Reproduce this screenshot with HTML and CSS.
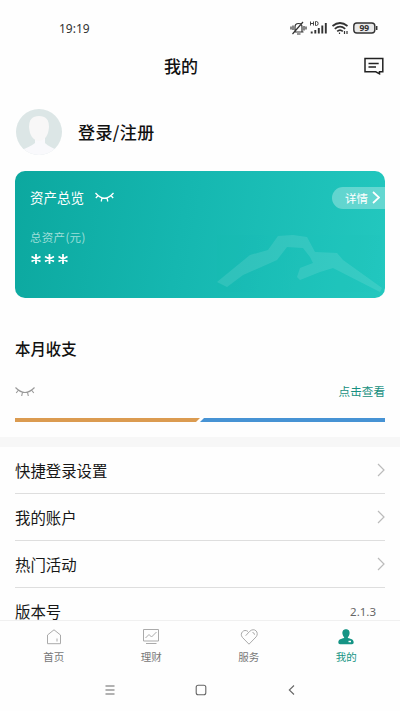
FILE: index.html
```
<!DOCTYPE html>
<html lang="zh-CN">
<head>
<meta charset="utf-8">
<title>我的</title>
<link rel="stylesheet" href="styles.css">
</head>
<body>
<div class="phone">
  <div class="status">
    <span class="time">19:19</span>
    <svg class="status-icons" width="90" height="16" viewBox="0 0 90 16" fill="none" stroke="#333" stroke-width="1.2">
      <path d="M5 12h9.500M6 11.500V7a3.500 3.500 0 0 1 7 0v4.500M8 14h3.500M3.500 14L14 2M2 6.500v3M4 5.500v4.500M15 6v4.500M17 6.500v3"/>
      <path d="M21.500 1.500v4M24.500 1.500v4M21.500 3.500h3M26.500 1.500v4h1a1.600 2 0 0 0 0-4z" stroke-width=".9"/>
      <path d="M22.700 13.500v-2M26.300 13.500V10M29.800 13.500V8M33.300 13.500V5.500M36.800 13.500V3" stroke-width="1.900"/>
      <path d="M43.500 6q7.500-6 15 0M45.800 8.800q5.200-4.500 10.400 0M48.200 11.300q2.800-2.500 5.600 0" stroke-width="1.700"/>
      <path d="M50.500 12.600v1.400M55.500 11v3M58 11v3" stroke-width="1.200"/>
      <rect x="64.800" y="3" width="21" height="10" rx="3" fill="#e9e9e9" stroke-width="1.400"/>
      <path d="M87.700 6v4" stroke-width="1.500"/>
      <text x="75.300" y="11.200" class="battery">99</text>
    </svg>
  </div>
  <header class="header">
    <h1>我的</h1>
    <svg class="message" width="20" height="18" viewBox="0 0 20 18" fill="none" stroke="#222" stroke-width="1.500">
      <path d="M1 1.500h17.800v13.300h-3.300v2l-3.700-2H1zM4.500 6.500h10.200M4.500 10h7.500"/>
    </svg>
  </header>
  <section class="profile">
    <svg width="46" height="46" viewBox="0 0 46 46">
      <defs><clipPath id="disc"><circle cx="23" cy="23" r="23"/></clipPath></defs>
      <g clip-path="url(#disc)">
        <rect width="46" height="46" fill="#dce6e6"/>
        <path d="M5 46V41q9-3 14-7v-5h10v5q4 4 13 7v5z" fill="#f9f9fc"/>
        <path d="M13 18q0-11 10-11t10 11q-1 13-10 14-9-1-10-14z" fill="#f8f7f7"/>
      </g>
    </svg>
    <span class="login">登录/注册</span>
  </section>
  <section class="card">
    <svg class="mountain" width="170" height="60" viewBox="0 0 170 60">
      <path d="M2 47L35 20 53 15 63 1 78 0 92 2 100 17 122 18 128 25 167 53 165 57 118 33 105 37 85 45 82 42 85 33 98 28 95 22 88 13 72 12 62 25 28 40 12 52z"/>
    </svg>
    <div class="card-top">
      <div class="assets">
        <span>资产总览</span>
        <svg width="19" height="11" viewBox="0 0 19 11" fill="none" stroke="#fff" stroke-width="1.300"><path d="M.5 1q9 10.500 18 0M3.200 3.500L.8 6M7 5.800L6.200 9.500M12 5.800L12.800 9.500M15.800 3.500L18.200 6"/></svg>
      </div>
      <a class="detail"><span>详情</span><svg width="8" height="13" viewBox="0 0 8 13" fill="none" stroke="#fff" stroke-width="1.700"><path d="M1 1l6 5.500L1 12"/></svg></a>
    </div>
    <div class="total">总资产(元)</div>
    <svg class="hidden-amount" width="40" height="12" viewBox="0 0 40 12" stroke="#fff" stroke-width="1.800"><path d="M6 1v10M1.500 3.500l9 5M10.500 3.500l-9 5M19.500 1v10M15 3.500l9 5M24 3.500l-9 5M33 1v10M28.500 3.500l9 5M37.500 3.500l-9 5"/></svg>
  </section>
  <section class="monthly">
    <h2>本月收支</h2>
    <div class="view-row">
      <svg width="20" height="11" viewBox="0 0 20 11" fill="none" stroke="#999" stroke-width="1.100"><path d="M.5 1.500q9.500 10 19 0M3.500 4L1.200 7M7.500 6.200L6.700 10M12.500 6.200L13.300 10M16.500 4L18.800 7"/></svg>
      <a>点击查看</a>
    </div>
    <div class="bars"><i class="income"></i><i class="spend"></i></div>
  </section>
  <ul class="menu">
    <li><span>快捷登录设置</span><svg class="chevron" viewBox="0 0 8 14"><path d="M1 1l6 6-6 6"/></svg></li>
    <li><span>我的账户</span><svg class="chevron" viewBox="0 0 8 14"><path d="M1 1l6 6-6 6"/></svg></li>
    <li><span>热门活动</span><svg class="chevron" viewBox="0 0 8 14"><path d="M1 1l6 6-6 6"/></svg></li>
    <li class="last"><span>版本号</span><span class="version">2.1.3</span></li>
  </ul>
  <nav class="tabs">
    <a><svg viewBox="0 0 18 18"><path d="M2.500 7L9 1.800 15.500 7v8.700h-13zM12 10.500v3"/></svg><span>首页</span></a>
    <a><svg viewBox="0 0 18 18"><path d="M1.500 1.500h15v11.500h-15zM3.500 10L7 6.500l2.500 2.500 5-5M4 15.500h10.500"/></svg><span>理财</span></a>
    <a><svg viewBox="0 0 18 18"><path d="M9 16.200L2.300 9.300C-.8 5.500 4 .2 8 3.500M5.700 7.700L9.500 3.500c5-4.700 10 1 6.700 5.300L9 16.200M12.500 4.500q2 .2 2 2.200"/></svg><span>服务</span></a>
    <a class="active"><svg viewBox="0 0 18 18"><path class="person" d="M9 1.300c-3 0-4 2.300-3.500 4.800.3 1.500 1 2.700 1.800 3.400C6.800 11 1.300 10 1.300 14.500q0 1.700 1.700 1.700h12q1.700 0 1.700-1.700c0-4.500-5.500-3.500-6-5 .8-.7 1.500-1.900 1.800-3.400C13 3.600 12 1.300 9 1.300z"/><path class="glint" d="M11.500 13.500h2.500"/></svg><span>我的</span></a>
  </nav>
  <div class="system">
    <svg width="10" height="10" viewBox="0 0 10 10"><path d="M.5 1h9M.5 5h9M.5 9h9"/></svg>
    <svg width="12" height="12" viewBox="0 0 12 12"><rect x="1.200" y="1.200" width="9.600" height="9.600" rx="2"/></svg>
    <svg width="10" height="10" viewBox="0 0 10 10"><path d="M7 .5L2.300 5 7 9.500"/></svg>
  </div>
</div>
</body>
</html>
```
FILE: styles.css
```
* { box-sizing: border-box; }
body {
  margin: 0;
  background: #fefefe;
  color: #171717;
  font-family: "Noto Sans CJK SC", sans-serif;
}
.phone {
  width: 400px;
  height: 711px;
  display: flex;
  flex-direction: column;
  overflow: hidden;
}
.status {
  height: 46px;
  flex: none;
  padding: 10px 21px 0 59px;
  display: flex;
  align-items: center;
  justify-content: space-between;
}
.time { font: 12px "Noto Sans", sans-serif; color: #333; }
.battery { font: 700 8.5px "Noto Sans", sans-serif; fill: #333; stroke: none; text-anchor: middle; }
.header {
  height: 40px;
  flex: none;
  padding: 0 16px 0 164px;
  display: flex;
  justify-content: space-between;
  align-items: center;
}
h1, h2 { margin: 0; font-weight: 500; color: #111; }
h1 { font-size: 17px; line-height: 40px; }
.profile {
  height: 85px;
  flex: none;
  padding: 7px 16px 0;
  display: flex;
  align-items: center;
  gap: 16px;
}
.login { font-size: 17px; font-weight: 500; line-height: 24px; letter-spacing: .4px; color: #111; }
.card {
  position: relative;
  height: 127px;
  flex: none;
  margin: 0 15px;
  padding: 15px 0 0 15px;
  border-radius: 10px;
  overflow: hidden;
  background: linear-gradient(100deg, #0ca89f 0%, #15b7b0 45%, #23c8bf 100%);
  color: #fff;
}
.mountain { position: absolute; right: 0; bottom: 3px; fill: #fff; opacity: .1; }
.card-top { display: flex; justify-content: space-between; align-items: center; height: 23px; }
.assets { display: flex; align-items: center; gap: 11px; font-size: 13.5px; line-height: 20px; padding-bottom: 1px; }
.detail {
  width: 53px;
  height: 22px;
  padding-left: 13px;
  display: flex;
  align-items: center;
  gap: 4px;
  border-radius: 11px 0 0 11px;
  background: rgba(255, 255, 255, .3);
  font-size: 11.5px;
}
.total { margin-top: 20px; font-size: 11.5px; line-height: 17px; letter-spacing: .3px; color: #9edfd9; }
.hidden-amount { display: block; margin-top: 7px; }
.monthly { height: 139px; flex: none; padding: 38px 15px 0; }
h2 { font-size: 15.4px; line-height: 24px; }
.view-row { height: 20px; margin-top: 21px; display: flex; align-items: center; justify-content: space-between; }
.view-row a { font-size: 11.6px; color: #168f80; }
.bars { display: flex; margin-top: 17px; height: 4px; }
.income { width: 185px; background: #db9b50; clip-path: polygon(0 0, 100% 0, calc(100% - 4px) 100%, 0 100%); }
.spend { flex: 1; background: #4793d4; clip-path: polygon(4px 0, 100% 0, 100% 100%, 0 100%); }
.menu {
  margin: 0;
  padding: 0 15px;
  list-style: none;
  border-top: 10px solid #f7f7f7;
  height: 183px;
  flex: none;
}
.menu li {
  height: 47px;
  display: flex;
  align-items: center;
  justify-content: space-between;
  border-bottom: 1px solid #dedede;
  font-size: 15.4px;
  line-height: 20px;
}
.menu .last { height: 32px; padding-top: 14px; border: 0; }
.version { font: 12px Roboto, sans-serif; letter-spacing: .2px; color: #666; padding-right: 9px; }
.menu .version { letter-spacing: 0; font-family: "Noto Sans", sans-serif; font-size: 11.5px; }
.chevron { width: 8px; height: 14px; fill: none; stroke: #bbb; stroke-width: 1.2; }
.tabs {
  height: 48px;
  flex: none;
  padding: 0 5px;
  border-top: 1px solid #f0f0f0;
  display: grid;
  grid-template-columns: repeat(4, 1fr);
}
.tabs a { display: flex; flex-direction: column; align-items: center; padding-top: 7px; font-size: 10.5px; line-height: 16px; color: #777; }
.tabs svg { width: 18px; height: 18px; margin-bottom: 3px; fill: none; stroke: #aaa; stroke-width: 1; }
.tabs .active { color: #159485; }
.tabs .person { fill: #159485; stroke: none; }
.tabs .glint { stroke: #fff; stroke-width: 1.5; }
.system { flex: 1; padding: 0 103px 0 105px; display: flex; justify-content: space-between; align-items: center; fill: none; stroke: #666; stroke-width: 1.1; }
```
